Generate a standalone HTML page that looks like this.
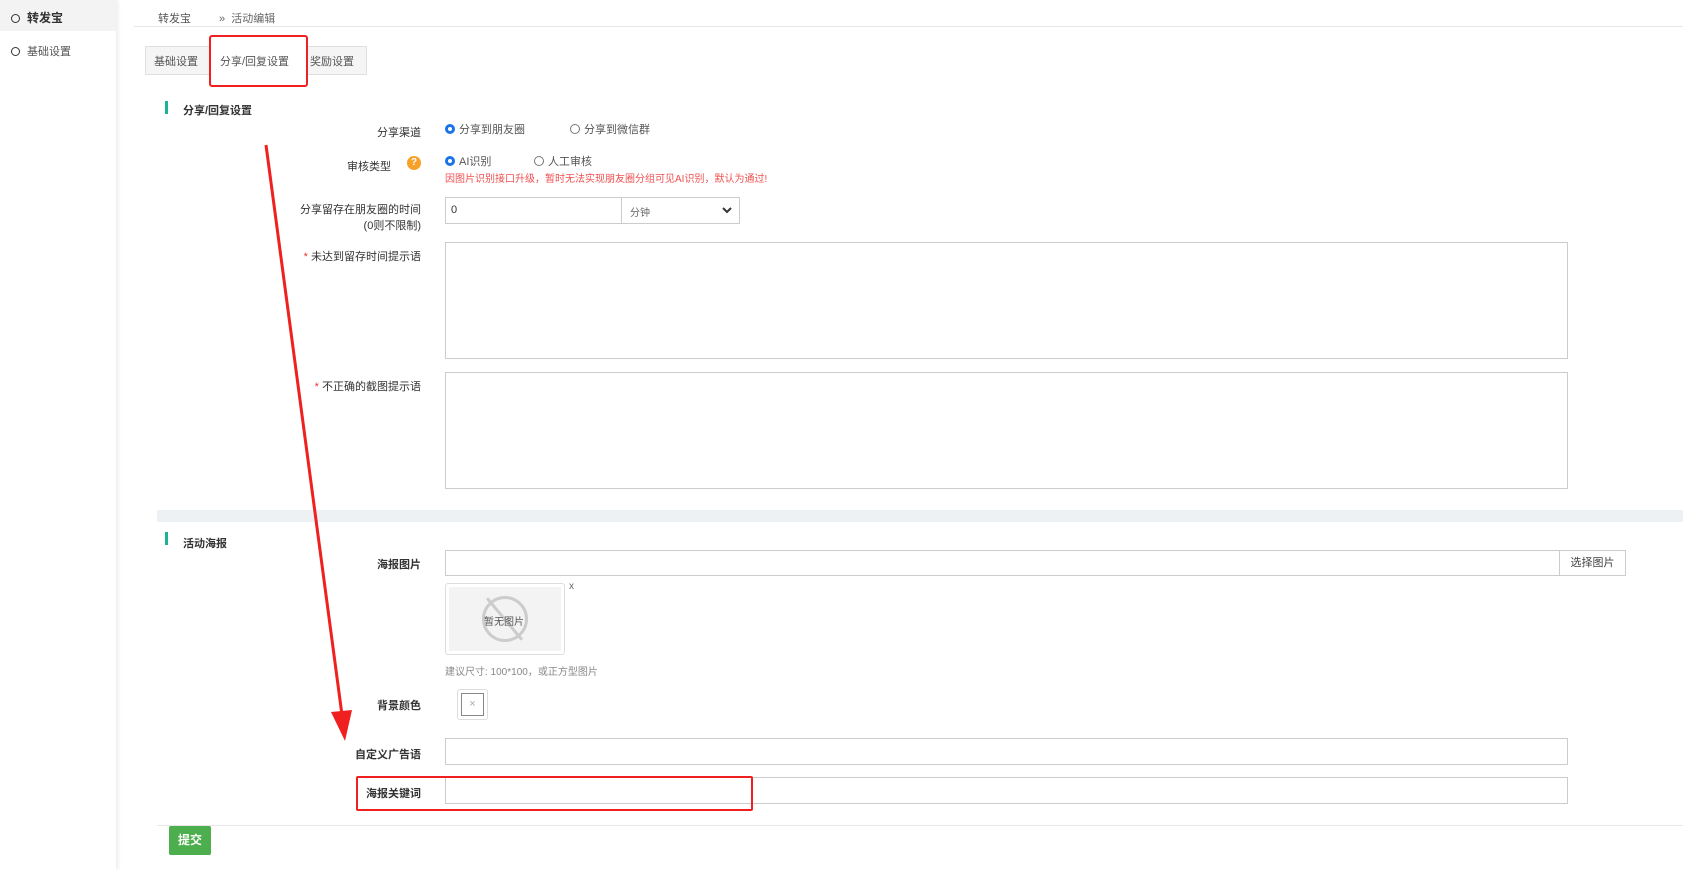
<!DOCTYPE html>
<html><head><meta charset="utf-8">
<style>
*{box-sizing:border-box;margin:0;padding:0}
body{width:1683px;height:870px;position:relative;overflow:hidden;background:#fff;font-family:"Liberation Sans","Noto Sans CJK SC",sans-serif;font-size:11px;color:#333}
.a{position:absolute}
.side{left:0;top:0;width:116px;height:870px;background:#fff;box-shadow:2px 0 4px rgba(0,0,0,.08)}
.circ{display:inline-block;width:9px;height:9px;border:1.5px solid #333;border-radius:50%;margin-right:7px;vertical-align:-1px}
.inp{border:1px solid #ccc;background:#fff}
.lbl{text-align:right;width:200px;left:221px;font-size:11px;color:#333}
.radio{display:inline-block;width:10px;height:10px;border:1px solid #777;border-radius:50%;vertical-align:-1px;margin-right:4px}
.radio.on{border:3px solid #1a73e8;background:#fff}
.hdr{font-weight:bold;font-size:11px}
.bar{width:3px;height:13px;background:#1ab394}
</style></head><body>
<div class="a side">
 <div class="a" style="left:0;top:0;width:116px;height:31px;background:#f3f3f3"></div>
 <div class="a" style="left:11px;top:9px;font-weight:bold;font-size:12px"><span class="circ"></span>转发宝</div>
 <div class="a" style="left:11px;top:43px;font-size:11px;color:#555"><span class="circ"></span>基础设置</div>
</div>
<div class="a" style="left:158px;top:10px;color:#555">转发宝</div>
<div class="a" style="left:219px;top:10px;color:#666">»&nbsp; 活动编辑</div>
<div class="a" style="left:134px;top:26px;width:1549px;height:1px;background:#e7e7e7"></div>
<div class="a" style="left:145px;top:46px;width:222px;height:29px;background:#f5f5f5;border:1px solid #e0e0e0"></div>
<div class="a" style="left:209px;top:46px;width:98px;height:29px;background:#fff;border-left:1px solid #e0e0e0;border-right:1px solid #e0e0e0"></div>
<div class="a" style="left:154px;top:53px;color:#555">基础设置</div>
<div class="a" style="left:220px;top:53px;color:#555">分享/回复设置</div>
<div class="a" style="left:310px;top:53px;color:#555">奖励设置</div>
<div class="a" style="left:209px;top:35px;width:99px;height:52px;border:2px solid #f02020;border-radius:3px"></div>

<div class="a bar" style="left:165px;top:101px"></div>
<div class="a hdr" style="left:183px;top:102px">分享/回复设置</div>

<div class="a lbl" style="top:124px">分享渠道</div>
<div class="a" style="left:445px;top:121px;color:#555"><span class="radio on"></span>分享到朋友圈</div>
<div class="a" style="left:570px;top:121px;color:#555"><span class="radio"></span>分享到微信群</div>

<div class="a lbl" style="top:158px;width:170px">审核类型</div>
<div class="a" style="left:407px;top:156px;width:14px;height:14px;border-radius:50%;background:#f7a128;color:#fff;font-size:10px;text-align:center;line-height:14px;font-weight:bold">?</div>
<div class="a" style="left:445px;top:153px;color:#555"><span class="radio on"></span>AI识别</div>
<div class="a" style="left:534px;top:153px;color:#555"><span class="radio"></span>人工审核</div>
<div class="a" style="left:445px;top:170px;color:#f05050;font-size:10px">因图片识别接口升级，暂时无法实现朋友圈分组可见AI识别，默认为通过!</div>

<div class="a lbl" style="top:201px">分享留存在朋友圈的时间</div>
<div class="a lbl" style="top:217px">(0则不限制)</div>
<div class="a inp" style="left:445px;top:197px;width:177px;height:27px"></div>
<div class="a" style="left:451px;top:204px;font-size:11px">0</div>
<div class="a inp" style="left:621px;top:197px;width:119px;height:27px"></div>
<div class="a" style="left:630px;top:204px;font-size:10px;color:#666">分钟</div>
<svg class="a" style="left:721px;top:205px" width="12" height="10"><path d="M2 3 L6 7 L10 3" stroke="#333" stroke-width="2" fill="none"/></svg>

<div class="a lbl" style="top:248px"><span style="color:#e33">*</span> 未达到留存时间提示语</div>
<div class="a inp" style="left:445px;top:242px;width:1123px;height:117px"></div>
<div class="a lbl" style="top:378px"><span style="color:#e33">*</span> 不正确的截图提示语</div>
<div class="a inp" style="left:445px;top:372px;width:1123px;height:117px"></div>

<div class="a" style="left:157px;top:510px;width:1526px;height:12px;background:#eef1f4"></div>

<div class="a bar" style="left:165px;top:532px"></div>
<div class="a hdr" style="left:183px;top:535px">活动海报</div>

<div class="a lbl" style="top:556px;font-weight:bold">海报图片</div>
<div class="a inp" style="left:445px;top:550px;width:1115px;height:26px"></div>
<div class="a inp" style="left:1559px;top:550px;width:67px;height:26px;text-align:center;line-height:24px;color:#444">选择图片</div>
<div class="a" style="left:445px;top:583px;width:120px;height:72px;border:1px solid #ddd;border-radius:3px;padding:3px"><div style="width:112px;height:64px;background:#f3f3f3"></div></div>
<div class="a" style="left:482px;top:596px;width:46px;height:46px;border:3px solid #ccc;border-radius:50%"></div>
<div class="a" style="left:503px;top:592px;width:3px;height:54px;background:#ccc;transform:rotate(-40deg)"></div>
<div class="a" style="left:484px;top:613px;font-size:10px;color:#555">暂无图片</div>
<div class="a" style="left:569px;top:581px;font-size:10px;color:#666">x</div>
<div class="a" style="left:445px;top:663px;font-size:10px;color:#888">建议尺寸: 100*100，或正方型图片</div>

<div class="a lbl" style="top:697px;font-weight:bold">背景颜色</div>
<div class="a" style="left:457px;top:689px;width:31px;height:31px;border:1px solid #ddd;border-radius:3px;padding:3px"><div style="width:23px;height:23px;border:1px solid #888;text-align:center;line-height:21px;color:#aaa;font-size:11px">×</div></div>

<div class="a lbl" style="top:746px;font-weight:bold">自定义广告语</div>
<div class="a inp" style="left:445px;top:738px;width:1123px;height:27px"></div>
<div class="a lbl" style="top:785px;font-weight:bold">海报关键词</div>
<div class="a inp" style="left:445px;top:777px;width:1123px;height:27px"></div>
<div class="a" style="left:356px;top:776px;width:397px;height:35px;border:2.5px solid #f02020;border-radius:2px"></div>

<div class="a" style="left:157px;top:825px;width:1526px;height:1px;background:#e7e7e7"></div>
<div class="a" style="left:169px;top:826px;width:42px;height:29px;background:#4cae4c;color:#fff;font-weight:bold;font-size:12px;text-align:center;line-height:29px;border-radius:2px">提交</div>

<svg class="a" style="left:0;top:0" width="1683" height="870">
<line x1="266" y1="145" x2="342" y2="715" stroke="#f02020" stroke-width="3"/>
<polygon points="331,712 352,710 345,741" fill="#f02020"/>
</svg>
</body></html>
